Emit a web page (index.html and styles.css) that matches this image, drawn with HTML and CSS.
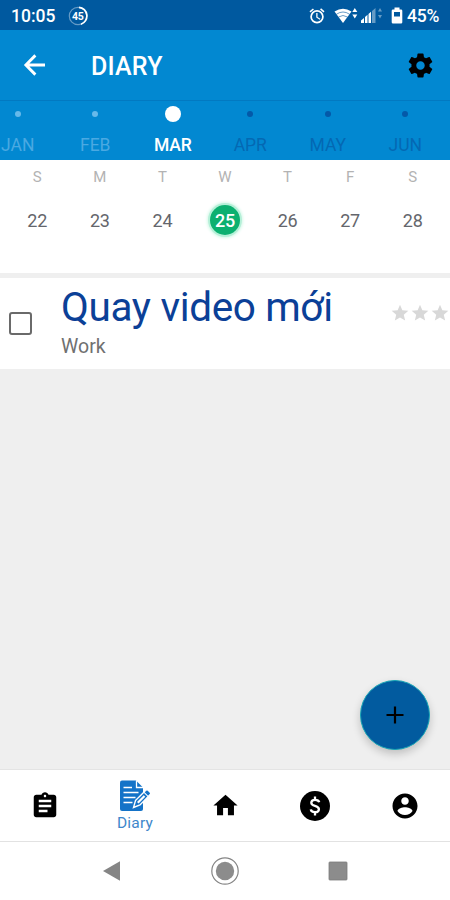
FILE: index.html
```html
<!DOCTYPE html>
<html lang="en">
<head>
    <meta charset="UTF-8">
    <meta name="viewport" content="width=device-width, initial-scale=1.0">
    <title>Diary</title>
    <link rel="stylesheet" href="styles.css">
</head>
<body>

    <!-- Status bar -->
    <div class="status-bar">
        <span class="clock">10:05</span>
        <svg class="speed-icon" width="20" height="20" viewBox="0 0 20 20">
            <circle cx="10" cy="10" r="8.7" fill="none" stroke="#fff" stroke-opacity=".4" stroke-width="1.2"/>
            <path d="M11 1.3A8.7 8.7 0 0 1 13 18.2" fill="none" stroke="#fff" stroke-width="1.7"/>
            <text x="9.8" y="13.6" text-anchor="middle">45</text>
        </svg>
        <svg class="alarm-icon" width="18" height="18" viewBox="0 0 24 24" fill="#fff">
            <path d="M22 5.7l-4.600-3.900-1.300 1.500 4.600 3.900L22 5.700zM7.900 3.400L6.600 1.900 2 5.700l1.300 1.500 4.600-3.800zM12.700 8h-1.700v6l4.700 2.900.8-1.200-3.800-2.300V8zM12 4a9 9 0 1 0 0 18 9 9 0 0 0 0-18zm0 15.700a6.700 6.700 0 1 1 0-13.400 6.700 6.700 0 0 1 0 13.400z"/>
        </svg>
        <svg class="wifi-icon" width="24" height="18" viewBox="0 0 24 18">
            <path d="M.5 4.500Q9 -1 17.500 4.500L9 16z" fill="#fff"/>
            <path d="M2.500 7.200Q9 2.800 15.500 7.200M4.500 10Q9 7 13.500 10" fill="none" stroke="#00599f" stroke-width=".6"/>
            <path d="M20.800 1l2.500 4h-5zM20.800 11.500l2.500-4h-5z" fill="#fff"/>
        </svg>
        <svg class="signal-icon" width="23" height="18" viewBox="0 0 23 18">
            <path d="M1 16v-2.500L4 11v5zM5 16v-6l2.500-2.200V16zM8.500 16V7L11 4.700V16z" fill="#fff"/>
            <path d="M12 16V4l3.500-3v15zM20 1l2 3.500h-4zM20 11.500l2-3.500h-4z" fill="#fff" fill-opacity=".4"/>
        </svg>
        <svg class="battery-icon" width="12" height="18" viewBox="0 0 12 18">
            <path fill-rule="evenodd" d="M3.500 0.500h5v2H10q1.300 0 1.300 1.300v11.400q0 1.300-1.300 1.300H2Q.7 16.500.7 15.200V3.800Q.7 2.500 2 2.500h1.500zM3 5v4.500h6V5z" fill="#fff"/>
        </svg>
        <span class="battery-level">45%</span>
    </div>

    <!-- App bar -->
    <header class="app-bar">
        <svg class="back-icon" width="30" height="30" viewBox="0 0 24 24" fill="none" stroke="#fff" stroke-width="2.300">
            <path d="M20 12H5M12.300 4.300L4.700 12l7.600 7.700"/>
        </svg>
        <h1>DIARY</h1>
        <svg class="settings-icon" width="29" height="29" viewBox="0 0 24 24">
            <path d="M19.430 12.980c.04-.32.07-.64.07-.98s-.03-.66-.07-.98l2.110-1.650c.19-.15.24-.42.12-.64l-2-3.460c-.12-.22-.39-.3-.61-.22l-2.490 1c-.52-.4-1.080-.73-1.690-.98l-.38-2.650C14.460 2.180 14.250 2 14 2h-4c-.25 0-.46.18-.49.42l-.38 2.650c-.61.25-1.170.59-1.690.98l-2.490-1c-.23-.09-.49 0-.61.22l-2 3.460c-.13.22-.07.49.12.64l2.110 1.650c-.04.32-.07.65-.07.98s.03.66.07.98l-2.110 1.650c-.19.15-.24.42-.12.64l2 3.460c.12.22.39.3.61.22l2.490-1c.52.4 1.080.73 1.690.98l.38 2.650c.03.24.24.42.49.42h4c.25 0 .46-.18.49-.42l.38-2.650c.61-.25 1.170-.59 1.690-.98l2.490 1c.23.09.49 0 .61-.22l2-3.460c.12-.22.07-.49-.12-.64l-2.110-1.650zM12 15.500c-1.930 0-3.500-1.570-3.500-3.500s1.570-3.500 3.500-3.500 3.500 1.570 3.500 3.500-1.570 3.500-3.500 3.500z"/>
        </svg>
    </header>

    <!-- Month strip -->
    <div class="months">
        <div class="month past"><i class="dot"></i><span>JAN</span></div>
        <div class="month past"><i class="dot"></i><span>FEB</span></div>
        <div class="month current"><i class="dot"></i><span>MAR</span></div>
        <div class="month"><i class="dot"></i><span>APR</span></div>
        <div class="month"><i class="dot"></i><span>MAY</span></div>
        <div class="month"><i class="dot"></i><span>JUN</span></div>
    </div>

    <!-- Week -->
    <div class="week">
        <div class="day"><span class="weekday">S</span><span class="date">22</span></div>
        <div class="day"><span class="weekday">M</span><span class="date">23</span></div>
        <div class="day"><span class="weekday">T</span><span class="date">24</span></div>
        <div class="day"><span class="weekday">W</span><span class="date today">25</span></div>
        <div class="day"><span class="weekday">T</span><span class="date">26</span></div>
        <div class="day"><span class="weekday">F</span><span class="date">27</span></div>
        <div class="day"><span class="weekday">S</span><span class="date">28</span></div>
    </div>

    <!-- Task list -->
    <main class="tasks">
        <div class="task">
            <span class="checkbox"></span>
            <div class="task-text">
                <div class="task-title">Quay video mới</div>
                <div class="task-category">Work</div>
            </div>
            <div class="stars">
                <svg width="20" height="20" viewBox="0 0 24 24"><path d="M12 17.270L18.180 21l-1.640-7.030L22 9.240l-7.190-.61L12 2 9.190 8.630 2 9.240l5.460 4.730L5.820 21z"/></svg>
                <svg width="20" height="20" viewBox="0 0 24 24"><path d="M12 17.270L18.180 21l-1.640-7.030L22 9.240l-7.190-.61L12 2 9.190 8.630 2 9.240l5.460 4.730L5.820 21z"/></svg>
                <svg width="20" height="20" viewBox="0 0 24 24"><path d="M12 17.270L18.180 21l-1.640-7.030L22 9.240l-7.190-.61L12 2 9.190 8.630 2 9.240l5.460 4.730L5.820 21z"/></svg>
            </div>
        </div>
        <button class="add-btn" aria-label="Add">
            <svg width="18" height="18" viewBox="0 0 18 18"><path d="M9 0.500v17M0.500 9h17" stroke="#000" stroke-width="2.200"/></svg>
        </button>
    </main>

    <!-- Bottom navigation -->
    <nav class="bottom-nav">
        <a class="nav-item">
            <svg width="30" height="30" viewBox="0 0 24 24"><path d="M19 3h-4.180C14.400 1.840 13.300 1 12 1c-1.300 0-2.400.84-2.820 2H5c-1.100 0-2 .9-2 2v14c0 1.100.9 2 2 2h14c1.100 0 2-.9 2-2V5c0-1.100-.9-2-2-2zm-7 0c.55 0 1 .45 1 1s-.45 1-1 1-1-.45-1-1 .45-1 1-1zm2 14H7v-2h7v2zm3-4H7v-2h10v2zm0-4H7V7h10v2z"/></svg>
        </a>
        <a class="nav-item active">
            <svg width="32" height="32" viewBox="0 0 32 32">
                <path d="M3 .5h14l7 7v21.500q0 2-2 2H3q-2 0-2-2V2.500q0-2 2-2z" fill="#1473c8"/>
                <path d="M17.500 .5v7H24" fill="none" stroke="#fff" stroke-width="1.300"/>
                <path d="M4.500 7.500h8.500M4.500 12.500h15M4.500 17.500h12M4.500 22.500h9" stroke="#fff" stroke-width="1.600"/>
                <path d="M16.500 20.500L26.800 10.200q1.200-1 2.400 0l2 2q1 1.200 0 2.400L21 25l-6.500 2.500z" fill="#1473c8" stroke="#fff" stroke-width="1.400"/>
                <path d="M18.800 22.700l6.700-6.700" stroke="#fff" stroke-width="2.200"/>
                <path d="M24.800 12.200l4.500 4.500" stroke="#fff" stroke-width="1.100"/>
            </svg>
            <span>Diary</span>
        </a>
        <a class="nav-item">
            <svg width="29" height="29" viewBox="0 0 24 24"><path d="M10 20v-6h4v6h5v-8h3L12 3 2 12h3v8z"/></svg>
        </a>
        <a class="nav-item">
            <svg width="30" height="30" viewBox="0 0 30 30">
                <circle cx="15" cy="15" r="15"/>
                <path d="M19.200 11.200Q18.600 8.800 15 8.800T11.300 11.800Q11.300 14 15 14.900T18.900 18.200Q18.900 21.200 15 21.200T10.800 18.400M15 5.500v3.500M15 21v3.500" fill="none" stroke="#fff" stroke-width="2.300"/>
            </svg>
        </a>
        <a class="nav-item">
            <svg width="30" height="30" viewBox="0 0 24 24"><path d="M12 2C6.480 2 2 6.480 2 12s4.480 10 10 10 10-4.480 10-10S17.520 2 12 2zm0 3c1.660 0 3 1.340 3 3s-1.340 3-3 3-3-1.340-3-3 1.340-3 3-3zm0 14.200c-2.500 0-4.710-1.280-6-3.220.03-1.990 4-3.080 6-3.080 1.990 0 5.970 1.090 6 3.080-1.290 1.940-3.500 3.220-6 3.220z"/></svg>
        </a>
    </nav>

    <!-- System navigation -->
    <div class="system-nav">
        <svg width="28" height="28" viewBox="0 0 28 28"><path d="M4 14L21 4.200v19.600z" fill="#858585"/></svg>
        <svg width="28" height="28" viewBox="0 0 28 28"><circle cx="14" cy="14" r="13.200" fill="none" stroke="#858585" stroke-width="1.200"/><circle cx="14" cy="14" r="9.200" fill="#8c8c8c"/></svg>
        <svg width="28" height="28" viewBox="0 0 28 28"><rect x="5" y="5" width="18" height="18" rx=".8" fill="#8c8c8c" stroke="#7c7c7c" stroke-width=".8"/></svg>
    </div>

</body>
</html>
```
FILE: styles.css
```css
* {
    box-sizing: border-box;
}

body {
    margin: 0;
    height: 900px;
    display: flex;
    flex-direction: column;
    overflow: hidden;
    font-family: Roboto, "Noto Sans", sans-serif;
    background-color: #fff;
}

svg {
    display: block;
    flex: none;
}

/* Status bar */
.status-bar {
    height: 30px;
    flex: none;
    display: flex;
    align-items: center;
    padding: 1px 10px 0 11px;
    background-color: #00599f;
    color: #fff;
    font-size: 17.500px;
    font-weight: 500;
}

.clock {
    width: 57px;
    padding-top: 1px;
}

.speed-icon text {
    font-size: 10.500px;
    font-weight: 700;
    fill: #fff;
    letter-spacing: -0.3px;
}

.alarm-icon {
    margin-left: auto;
}

.wifi-icon {
    margin-left: 8px;
}

.signal-icon {
    margin-left: 2px;
}

.battery-icon {
    margin-left: 8px;
}

.battery-level {
    width: 33px;
    margin-left: 4px;
    padding-top: 1px;
    font-size: 17.500px;
    letter-spacing: -0.2px;
}

/* App bar */
.app-bar {
    height: 71px;
    flex: none;
    display: flex;
    align-items: center;
    padding: 0 15px 0 20px;
    background-color: #0288d1;
    border-bottom: 1px solid #0279c1;
}

.app-bar h1 {
    margin: 3px 0 0 41px;
    color: #fff;
    font-size: 25px;
    font-weight: 500;
    letter-spacing: 0.2px;
}

.settings-icon {
    margin-left: auto;
}

/* Month strip */
.months {
    height: 59px;
    flex: none;
    display: grid;
    grid-template-columns: repeat(6, 77.500px);
    margin-left: -21px;
    background-color: #0288d1;
}

.month {
    display: flex;
    flex-direction: column;
    align-items: center;
    color: #0468b3;
    font-size: 17.500px;
    line-height: 20px;
}

.dot {
    width: 6px;
    height: 6px;
    margin: 10px 0 18px;
    border-radius: 50%;
    background-color: #0459a8;
}

.past {
    color: #4aa9e2;
}

.past .dot {
    background-color: #67b9ea;
}

.current {
    color: #fff;
    font-weight: 500;
    letter-spacing: -0.2px;
}

.current .dot {
    width: 16px;
    height: 16px;
    margin: 5px 0 13px;
    background-color: #fff;
}

/* Week */
.week {
    height: 113px;
    flex: none;
    display: grid;
    grid-template-columns: repeat(7, 1fr);
    padding: 0 6px;
}

.day {
    display: flex;
    flex-direction: column;
    align-items: center;
}

.weekday {
    margin-top: 7px;
    color: #b3b3b3;
    font-size: 15px;
    line-height: 20px;
}

.date {
    width: 30px;
    height: 30px;
    margin-top: 18px;
    line-height: 31px;
    text-align: center;
    color: #64666c;
    font-size: 18px;
    letter-spacing: -0.2px;
}

.today {
    border-radius: 50%;
    background-color: #0cb070;
    box-shadow: 0 0 0 2px #b5f0d8, 0 0 3px 3px #d5f8e9;
    color: #fff;
    font-weight: 500;
}

/* Task list */
.tasks {
    position: relative;
    flex: 1;
    padding-top: 5px;
    background-color: #efefef;
}

.task {
    height: 91px;
    display: flex;
    background-color: #fff;
}

.checkbox {
    width: 23px;
    height: 23px;
    flex: none;
    margin: 34px 0 0 9px;
    border: 2px solid #6a6a6a;
    border-radius: 3px;
}

.task-text {
    margin-left: 29px;
    white-space: nowrap;
}

.task-title {
    padding-top: 5px;
    color: #0b4097;
    font-size: 40.500px;
    line-height: 48px;
    letter-spacing: -0.350px;
}

.task-category {
    margin-top: 4px;
    color: #707070;
    font-size: 19.500px;
    line-height: 24px;
}

.stars {
    display: flex;
    margin: 25px 0 0 auto;
    fill: #d8d8d8;
}

/* Floating add button */
.add-btn {
    position: absolute;
    right: 20px;
    bottom: 19px;
    width: 70px;
    height: 70px;
    display: flex;
    align-items: center;
    justify-content: center;
    padding: 0;
    border: 1px solid #16a5b5;
    border-radius: 50%;
    background-color: #025b9f;
    box-shadow: 0 4px 8px rgba(0, 0, 0, 0.2);
}

/* Bottom navigation */
.bottom-nav {
    height: 72px;
    flex: none;
    display: grid;
    grid-template-columns: repeat(5, 1fr);
    background-color: #fff;
    border-top: 1px solid #e4e4e4;
}

.nav-item {
    display: flex;
    flex-direction: column;
    align-items: center;
    justify-content: center;
}

.active {
    justify-content: flex-start;
    padding-top: 10px;
    color: #3e87cb;
    font-size: 15.500px;
    line-height: 22px;
    letter-spacing: 0.2px;
}

/* System navigation */
.system-nav {
    height: 59px;
    flex: none;
    display: grid;
    grid-template-columns: repeat(3, 112.500px);
    justify-content: center;
    justify-items: center;
    align-items: center;
    border-top: 1px solid #e2e2e2;
}
```
